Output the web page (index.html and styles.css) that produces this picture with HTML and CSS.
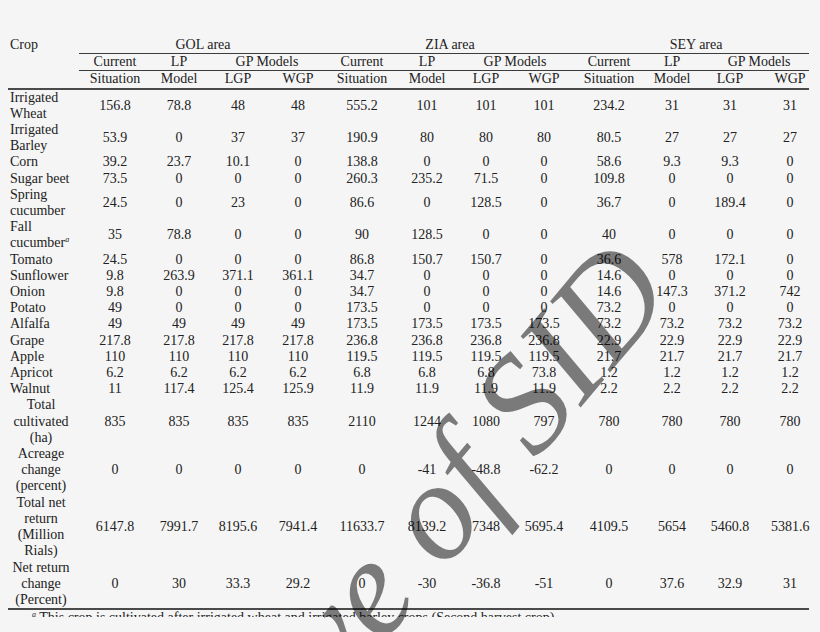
FILE: index.html
```html
<!DOCTYPE html>
<html>
<head>
<meta charset="utf-8">
<title>Crop pattern results</title>
<link rel="stylesheet" href="styles.css">
</head>
<body>
<div class="page">
  <div class="sheet">
    <table class="data">
      <colgroup>
        <col class="w71"><col class="w72"><col class="w56"><col class="w62"><col class="w58">
        <col class="w70"><col class="w60"><col class="w58"><col class="w58">
        <col class="w72"><col class="w54"><col class="w62"><col class="w48">
      </colgroup>
      <thead>
        <tr class="hr1">
          <th class="crop" rowspan="3">Crop</th>
          <th class="thin" colspan="4">GOL area</th>
          <th class="thin" colspan="4">ZIA area</th>
          <th class="thin last" colspan="4">SEY area</th>
        </tr>
        <tr class="hr2">
          <th class="thin">Current</th><th class="thin">LP</th><th class="thin" colspan="2">GP Models</th>
          <th class="thin">Current</th><th class="thin">LP</th><th class="thin" colspan="2">GP Models</th>
          <th class="thin">Current</th><th class="thin">LP</th><th class="thin last" colspan="2">GP Models</th>
        </tr>
        <tr class="hr3">
          <th>Situation</th><th>Model</th><th>LGP</th><th>WGP</th>
          <th>Situation</th><th>Model</th><th>LGP</th><th>WGP</th>
          <th>Situation</th><th>Model</th><th>LGP</th><th class="last">WGP</th>
        </tr>
      </thead>
      <tbody>
        <tr><td class="name">Irrigated<br>Wheat</td><td>156.8</td><td>78.8</td><td>48</td><td>48</td><td>555.2</td><td>101</td><td>101</td><td>101</td><td>234.2</td><td>31</td><td>31</td><td class="last">31</td></tr>
        <tr><td class="name">Irrigated<br>Barley</td><td>53.9</td><td>0</td><td>37</td><td>37</td><td>190.9</td><td>80</td><td>80</td><td>80</td><td>80.5</td><td>27</td><td>27</td><td class="last">27</td></tr>
        <tr><td class="name">Corn</td><td>39.2</td><td>23.7</td><td>10.1</td><td>0</td><td>138.8</td><td>0</td><td>0</td><td>0</td><td>58.6</td><td>9.3</td><td>9.3</td><td class="last">0</td></tr>
        <tr><td class="name">Sugar beet</td><td>73.5</td><td>0</td><td>0</td><td>0</td><td>260.3</td><td>235.2</td><td>71.5</td><td>0</td><td>109.8</td><td>0</td><td>0</td><td class="last">0</td></tr>
        <tr><td class="name">Spring<br>cucumber</td><td>24.5</td><td>0</td><td>23</td><td>0</td><td>86.6</td><td>0</td><td>128.5</td><td>0</td><td>36.7</td><td>0</td><td>189.4</td><td class="last">0</td></tr>
        <tr><td class="name">Fall<br>cucumber<sup class="fn">a</sup></td><td>35</td><td>78.8</td><td>0</td><td>0</td><td>90</td><td>128.5</td><td>0</td><td>0</td><td>40</td><td>0</td><td>0</td><td class="last">0</td></tr>
        <tr><td class="name">Tomato</td><td>24.5</td><td>0</td><td>0</td><td>0</td><td>86.8</td><td>150.7</td><td>150.7</td><td>0</td><td>36.6</td><td>578</td><td>172.1</td><td class="last">0</td></tr>
        <tr><td class="name">Sunflower</td><td>9.8</td><td>263.9</td><td>371.1</td><td>361.1</td><td>34.7</td><td>0</td><td>0</td><td>0</td><td>14.6</td><td>0</td><td>0</td><td class="last">0</td></tr>
        <tr><td class="name">Onion</td><td>9.8</td><td>0</td><td>0</td><td>0</td><td>34.7</td><td>0</td><td>0</td><td>0</td><td>14.6</td><td>147.3</td><td>371.2</td><td class="last">742</td></tr>
        <tr><td class="name">Potato</td><td>49</td><td>0</td><td>0</td><td>0</td><td>173.5</td><td>0</td><td>0</td><td>0</td><td>73.2</td><td>0</td><td>0</td><td class="last">0</td></tr>
        <tr><td class="name">Alfalfa</td><td>49</td><td>49</td><td>49</td><td>49</td><td>173.5</td><td>173.5</td><td>173.5</td><td>173.5</td><td>73.2</td><td>73.2</td><td>73.2</td><td class="last">73.2</td></tr>
        <tr><td class="name">Grape</td><td>217.8</td><td>217.8</td><td>217.8</td><td>217.8</td><td>236.8</td><td>236.8</td><td>236.8</td><td>236.8</td><td>22.9</td><td>22.9</td><td>22.9</td><td class="last">22.9</td></tr>
        <tr><td class="name">Apple</td><td>110</td><td>110</td><td>110</td><td>110</td><td>119.5</td><td>119.5</td><td>119.5</td><td>119.5</td><td>21.7</td><td>21.7</td><td>21.7</td><td class="last">21.7</td></tr>
        <tr><td class="name">Apricot</td><td>6.2</td><td>6.2</td><td>6.2</td><td>6.2</td><td>6.8</td><td>6.8</td><td>6.8</td><td>73.8</td><td>1.2</td><td>1.2</td><td>1.2</td><td class="last">1.2</td></tr>
        <tr><td class="name">Walnut</td><td>11</td><td>117.4</td><td>125.4</td><td>125.9</td><td>11.9</td><td>11.9</td><td>11.9</td><td>11.9</td><td>2.2</td><td>2.2</td><td>2.2</td><td class="last">2.2</td></tr>
        <tr><td class="name mid">Total<br>cultivated<br>(ha)</td><td>835</td><td>835</td><td>835</td><td>835</td><td>2110</td><td>1244</td><td>1080</td><td>797</td><td>780</td><td>780</td><td>780</td><td class="last">780</td></tr>
        <tr><td class="name mid">Acreage<br>change<br>(percent)</td><td>0</td><td>0</td><td>0</td><td>0</td><td>0</td><td>-41</td><td>-48.8</td><td>-62.2</td><td>0</td><td>0</td><td>0</td><td class="last">0</td></tr>
        <tr><td class="name mid">Total net<br>return<br>(Million<br>Rials)</td><td>6147.8</td><td>7991.7</td><td>8195.6</td><td>7941.4</td><td>11633.7</td><td>8139.2</td><td>7348</td><td>5695.4</td><td>4109.5</td><td>5654</td><td>5460.8</td><td class="last">5381.6</td></tr>
        <tr class="endrow"><td class="name mid">Net return<br>change<br>(Percent)</td><td>0</td><td>30</td><td>33.3</td><td>29.2</td><td>0</td><td>-30</td><td>-36.8</td><td>-51</td><td>0</td><td>37.6</td><td>32.9</td><td class="last">31</td></tr>
      </tbody>
    </table>
    <p class="note"><sup class="fn">a</sup> This crop is cultivated after irrigated wheat and irrigated barley crops (Second harvest crop)</p>
  </div>
  <div class="watermark">Archive of SID</div>
</div>
</body>
</html>
```

FILE: styles.css
```css
html, body {
  margin: 0;
  padding: 0;
  background: #f5f5f5;
}

.page {
  position: relative;
  width: 820px;
  height: 632px;
  overflow: hidden;
  background: #f5f5f5;
  color: #222;
  font-family: "Liberation Serif", "Times New Roman", serif;
  font-size: 14px;
}

.sheet {
  box-sizing: border-box;
  height: 617px;
  overflow: hidden;
  padding: 37px 0 0 8px;
}

.data {
  border-collapse: collapse;
  table-layout: fixed;
  width: 801px;
}

.w71 { width: 71px; }
.w72 { width: 72px; }
.w56 { width: 56px; }
.w62 { width: 62px; }
.w58 { width: 58px; }
.w70 { width: 70px; }
.w60 { width: 60px; }
.w54 { width: 54px; }
.w48 { width: 48px; }

.data th,
.data td {
  padding: 0;
  font-weight: normal;
  line-height: 16.2px;
  text-align: center;
  vertical-align: middle;
  white-space: nowrap;
}

.data .last {
  padding-left: 10px;
}

.data th.crop {
  text-align: left;
  vertical-align: top;
  padding-left: 2px;
  border-bottom: 2px solid #4a4a4a;
}

.data th.thin {
  border-bottom: 1px solid #3c3c3c;
}

.data .hr3 th {
  border-bottom: 2px solid #4a4a4a;
}

.data td.name {
  text-align: left;
  padding-left: 2px;
}

.data td.name.mid {
  text-align: center;
  padding-right: 7px;
}

.data .endrow td {
  border-bottom: 2px solid #4a4a4a;
}

.fn {
  font-size: 8px;
  font-style: italic;
  line-height: 0;
  vertical-align: 5px;
}

.note {
  margin: 0;
  padding-left: 24px;
  line-height: 16.2px;
  white-space: nowrap;
}

.watermark {
  position: absolute;
  left: 55px;
  top: 852px;
  transform-origin: 0 0;
  transform: rotate(-50deg);
  font-family: "Liberation Serif", "Times New Roman", serif;
  font-style: italic;
  font-size: 140px;
  line-height: 1;
  white-space: nowrap;
  color: rgba(0, 0, 0, 0.5);
  pointer-events: none;
}
```
